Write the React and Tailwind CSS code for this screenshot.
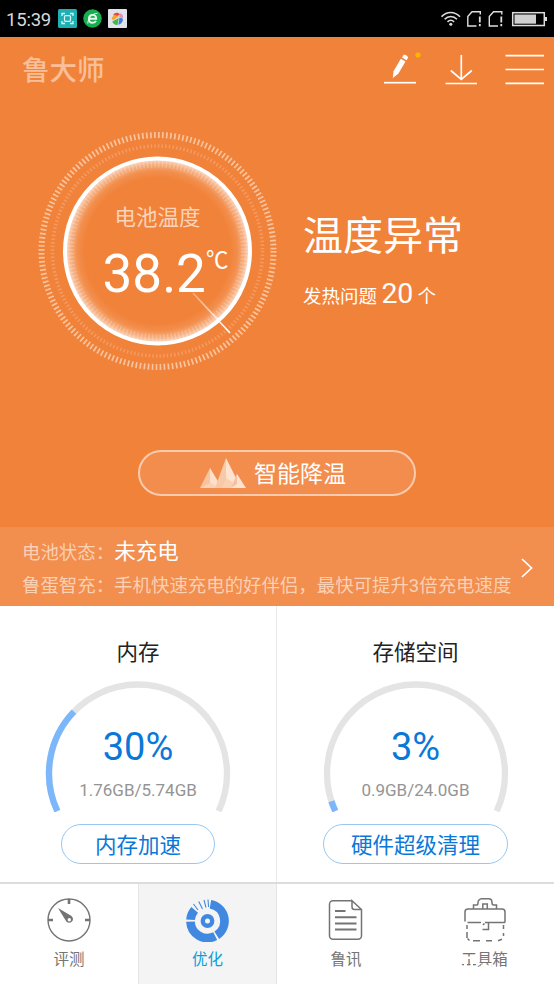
import React from "react";

const gauges = [
  { title: "内存", percent: 30, usage: "1.76GB/5.74GB", action: "内存加速", width: "w-[154px]" },
  { title: "存储空间", percent: 3, usage: "0.9GB/24.0GB", action: "硬件超级清理", width: "w-[185px]" },
];

const point = (cx, cy, r, deg) => {
  const a = (deg * Math.PI) / 180;
  return `${(cx + r * Math.cos(a)).toFixed(2)} ${(cy + r * Math.sin(a)).toFixed(2)}`;
};

// arc drawn clockwise, 0deg points to the right
const arc = (cx, cy, r, from, to) =>
  `M${point(cx, cy, r, from)}A${r} ${r} 0 ${to - from > 180 ? 1 : 0} 1 ${point(cx, cy, r, to)}`;

const StatusBar = () => (
  <div className="h-[37px] bg-black flex items-center justify-between px-[7px]">
    <div className="flex items-center gap-[6px]">
      <span className="w-[45px] text-[18.500px] leading-none tracking-[-0.200px] text-[#d8d8d8] whitespace-nowrap pt-[3px] -ml-px mr-px">15:39</span>
      <svg width="19" height="19" viewBox="0 0 19 19" fill="none">
        <rect width="19" height="19" rx="1.5" fill="#1fb0b3" />
        <path d="M4 7V4.5h3M12 4.5h3V7M15 12v2.500h-3M7 14.500H4V12" stroke="#d9f5f5" strokeWidth="1.300" />
        <rect x="6.500" y="6.700" width="6" height="5.600" rx="1" stroke="#d9f5f5" strokeWidth="1.200" />
      </svg>
      <svg width="19" height="19" viewBox="0 0 19 19" fill="none">
        <circle cx="9.500" cy="9.500" r="9.300" fill="#18ad50" />
        <path d="M6 9.700h7.200c0-2.400-1.300-3.800-3.500-3.800-2.300 0-3.800 1.700-3.800 4s1.500 3.800 3.800 3.800c1.500 0 2.700-.6 3.300-1.800" stroke="#e6f8ec" strokeWidth="1.900" />
        <path d="M4.800 14.500C5 9 9 4.500 14.500 4.300" stroke="#e6f8ec" strokeWidth="1" />
      </svg>
      <svg width="19" height="19" viewBox="0 0 19 19">
        <rect width="19" height="19" rx="1" fill="#e2e2ea" />
        <path d="M5 6.200C7 3.200 10 3.200 12 5.300L9.500 7z" fill="#e5483c" />
        <path d="M12.200 4.300c2.200 .8 3.200 2.500 2.900 4.700L11 7.500z" fill="#e78bb7" />
        <path d="M3.800 9.300c.5-3 3.900-3.500 6.900-1.800L5 11.500z" fill="#f4a62c" />
        <path d="M4.300 12.500 10.800 9l-1.300 7c-2.300.3-4.500-1-5.200-3.500z" fill="#45b649" />
        <path d="M11.500 8.500c2.800 0 4 1.500 3.200 3.600-.8 2-2.200 3.300-4.400 3.700z" fill="#3c7fe0" />
      </svg>
    </div>
    <svg width="106" height="19" viewBox="0 0 106 19" fill="none" stroke="#dedede" strokeWidth="1.400">
      <path d="M0.500 7.700C6 2 13.500 2 19 7.700M3.600 10.300c3.600-3.700 8.800-3.700 12.400 0M6.500 12.900c2-2 4.600-2 6.600 0" strokeWidth="1.600" />
      <circle cx="9.800" cy="15.300" r="1.500" fill="#dedede" stroke="none" />
      {[26, 47.5].map((x) => (
        <g key={x} transform={`translate(${x} 2)`}>
          <path d="M9.500 15H.8V5.500L5 .8h8.300v2.700" />
          <path d="M12.800 5.500v6M12.800 13v2.300" strokeWidth="1.800" />
        </g>
      ))}
      <rect x="71.700" y="3.700" width="31.600" height="12.800" strokeWidth="1.500" />
      <path d="M73.500 5.500h21.500v9.200H73.500z" fill="#d0d0d0" stroke="none" />
      <path d="M104 8h2v4h-2z" fill="#dedede" stroke="none" />
    </svg>
  </div>
);

const Header = () => (
  <div className="h-[63px] flex items-center justify-between pl-[22px] pr-[9px]">
    <h1 className="text-[27.500px] leading-none font-medium text-[#f9bf99] pt-[5px]">鲁大师</h1>
    <svg width="162" height="36" viewBox="0 0 162 36" fill="none" stroke="#fff" strokeWidth="1.700">
      {/* edit */}
      <path d="M1 31.700h32" />
      <path d="M9.800 27 10.500 20.200 17.800 7.800l4.700 2.700L15.300 22.700z" fill="#fff" stroke="none" />
      <path d="M19 6.600 20.300 4.300c1-1.500 5.500 1.100 4.600 2.800L23.600 9.300z" fill="#fff" stroke="none" />
      <circle cx="35" cy="4" r="2.600" fill="#ffb400" stroke="none" />
      {/* download */}
      <path d="M62.500 32.500H94M78.300 4v24M67.800 19.500l10.500 9 10.500-9" />
      {/* menu */}
      <path d="M122.500 4.700H161M122.500 18.500H161M122.500 32.300H161" />
    </svg>
  </div>
);

const Dial = () => (
  <div className="relative w-[240px] h-[240px] shrink-0">
    <svg width="240" height="240" viewBox="0 0 240 240" fill="none">
      <defs>
        <radialGradient id="glow">
          <stop offset="0.780" stopColor="#fff" stopOpacity="0" />
          <stop offset="0.860" stopColor="#fff" stopOpacity="0.100" />
          <stop offset="0.930" stopColor="#fff" stopOpacity="0.360" />
          <stop offset="1" stopColor="#fff" stopOpacity="0.800" />
        </radialGradient>
        <linearGradient id="hand" x1="156" y1="162" x2="193" y2="202" gradientUnits="userSpaceOnUse">
          <stop stopColor="#fff" stopOpacity="0.300" />
          <stop offset="1" stopColor="#fff" />
        </linearGradient>
      </defs>
      <circle cx="120.500" cy="120" r="116" stroke="#f9c4a0" strokeWidth="6" strokeDasharray="1.700 2.349" />
      <circle cx="120.500" cy="120" r="105" stroke="#f49c66" strokeWidth="3.600" strokeDasharray="1.400 2.265" />
      <circle cx="120.500" cy="120" r="93" fill="url(#glow)" />
      <circle cx="120.500" cy="120" r="87" stroke="#fff" strokeOpacity="0.200" strokeWidth="7" strokeDasharray="1.500 2.296" />
      <circle cx="120.500" cy="120" r="92.500" stroke="#fff" strokeWidth="4" />
      <path d="M156 162 193 202" stroke="url(#hand)" strokeWidth="1.700" />
    </svg>
    <div className="absolute inset-0 flex flex-col items-center pt-[74px]">
      <p className="text-[21.500px] leading-[26px] text-[#fbd3b9] pl-px">电池温度</p>
      <div className="flex items-start mt-[14px] ml-[17px] text-white">
        <span className="text-[53px] leading-[58px]">38.2</span>
        <span className="text-[22.500px] leading-[26px] mt-[2px]">℃</span>
      </div>
    </div>
  </div>
);

const CoolButton = () => (
  <button className="w-[278px] h-[46px] pr-[9px] rounded-full border-2 border-[#f9cbae] bg-[#f28d4d] flex items-center justify-center gap-[7px] text-white">
    <svg width="48" height="32" viewBox="0 0 48 32">
      <path d="M1 31 11 11l9 20z" fill="#f8c39d" />
      <path d="M11 11 20 26v5l-9-5z" fill="#fde0cb" />
      <path d="M1 31 11 26l9 5z" fill="#fbd2b5" />
      <path d="M16 31 27 1v30z" fill="#f9c8a5" />
      <path d="M27 1 42 31H27z" fill="#fde3d0" />
      <path d="M27 21l9 6-4 4h-9z" fill="#fad0b3" />
      <path d="M32 31 38 17l9 14z" fill="#fde3d0" />
      <path d="M32 31 38 17v10z" fill="#f8c09a" />
    </svg>
    <span className="text-[23px] leading-none pt-[2px]">智能降温</span>
  </button>
);

const BatteryStrip = () => (
  <div className="h-[79px] bg-[#f28e4e] flex items-center justify-between pl-[22px] pr-[21px]">
    <div className="text-[18.430px] text-[#fbd0b3] whitespace-nowrap pt-[5px]">
      <p className="h-[33px] flex items-center">
        电池状态：<span className="text-[21.500px] text-white">未充电</span>
      </p>
      <p className="h-[33px] flex items-center">鲁蛋智充：手机快速充电的好伴侣，最快可提升3倍充电速度</p>
    </div>
    <svg className="mt-[3px]" width="12" height="20" viewBox="0 0 12 20" fill="none" stroke="#fff" strokeWidth="1.700">
      <path d="M1 1l9.500 9L1 19" />
    </svg>
  </div>
);

const GaugeCard = ({ title, percent, usage, action, width }) => (
  <div className="flex flex-col items-center pt-[32px] first:border-r first:border-[#e9e9e9]">
    <h2 className="text-[21.500px] leading-[30px] text-[#222]">{title}</h2>
    <div className="relative w-[186px] h-[132px] mt-[12px]">
      <svg width="186" height="132" viewBox="0 0 186 132" fill="none" strokeWidth="6.300">
        <path d={arc(93, 93.5, 89, 155, 385)} stroke="#e4e4e4" />
        <path d={arc(93, 93.5, 89, 155, 155 + percent * 2.3)} stroke="#7db7fb" />
      </svg>
      <div className="absolute inset-0 flex flex-col items-center pt-[45px]">
        <span className="text-[38px] leading-[44px] text-[#0a78d8]">{percent}%</span>
        <span className="text-[17px] leading-[20px] mt-[11px] text-[#949494]">{usage}</span>
      </div>
    </div>
    <button
      className={`mt-[12px] h-[40px] pt-[3px] rounded-full border border-[#97c7f0] text-[21.500px] leading-none text-[#0a78d8] whitespace-nowrap ${width}`}
    >
      {action}
    </button>
  </div>
);

const MeterIcon = () => (
  <svg width="44" height="44" viewBox="0 0 44 44" fill="none" stroke="#747474">
    <circle cx="22" cy="22" r="21" strokeWidth="1.400" />
    <path d="M22 1v5M1 22h5M38 22h5" strokeWidth="2.600" />
    <path d="M11 10 24.500 18c4 4-1 9-5.200 5.500z" fill="#747474" stroke="none" />
    <circle cx="22.300" cy="21.700" r="1.700" fill="#fff" stroke="none" />
  </svg>
);

const OptimizeIcon = () => (
  <svg width="44" height="44" viewBox="0 0 44 44" fill="none" stroke="#4189e0">
    <path d={arc(21.5, 23, 17, 184, 221)} strokeWidth="8.700" />
    <path d={arc(21.5, 23, 17, 63, 178)} strokeWidth="8.700" />
    <path d={arc(21.5, 23, 17, -80, 57)} strokeWidth="8.700" />
    <path d="M7.500 6l4.500 6M12.800 3.500l3.700 7.500M18 2l2 7.500M22 1.500l.6 7.500" strokeWidth="1.100" />
    <circle cx="21.500" cy="23" r="4.700" strokeWidth="4.400" />
  </svg>
);

const NewsIcon = () => (
  <svg width="44" height="44" viewBox="0 0 44 44" fill="none" stroke="#747474" strokeWidth="1.500">
    <path d="M28 2.700H9a3.500 3.500 0 0 0-3.500 3.500v31.500A3.500 3.500 0 0 0 9 41.200h25a3.500 3.500 0 0 0 3.500-3.500V11.500L28 2.700V9a2.500 2.500 0 0 0 2.500 2.500h7" />
    <path d="M11 13h10.500M11 19.200h21.500M11 25.400h21.500M11 31.600h21.500" strokeWidth="2" />
  </svg>
);

const ToolboxIcon = () => (
  <svg width="44" height="44" viewBox="0 0 44 44" fill="none" stroke="#747474" strokeWidth="1.500">
    <path d="M2 23.500V14c0-2 1-3 3-3h34c2 0 3 1 3 3v10.500M4.500 24.500H18M22 24.500H42" />
    <path d="M10.500 11V7H14c1 0 1-1 1-2.500S16.500.8 18.500.8h7C28 .8 29 2 29 4.500 29 6 29.500 7 30.500 7h3v4M19.800 11V6h4.500v5" />
    <path d="M4 27v4M4 34v6M4.500 40.500l2 2M10 42.700h7M23 42.700h6M35 42.700l4-1.500M40.500 38v-3M40.500 31v-4M25.500 25v6.500h-6M21.500 25.500l-1.500 1.500" strokeWidth="1.500" />
  </svg>
);

const tabs = [
  { label: "评测", Icon: MeterIcon },
  { label: "优化", Icon: OptimizeIcon, active: true },
  { label: "鲁讯", Icon: NewsIcon },
  { label: "工具箱", Icon: ToolboxIcon, worn: true },
];

// small chips knocked out of the label
const Chips = () => (
  <svg className="absolute left-0 top-0" width="47" height="22" viewBox="0 0 47 22" fill="#fff">
    <path d="M4 7.500h7v2.500H4zM3 14h3v6H3zM9.500 14.500h2.500v6h-2.500zM15.500 11.500h3v5h-3zM20 15.500h5v2.500h-5zM27.500 14.500h3v5h-3zM32 16h2.500v4h-2.500z" />
  </svg>
);

const App = () => {
  return (
    <div className="w-[554px] h-[984px] flex flex-col overflow-hidden bg-white font-[Roboto,'Noto_Sans_CJK_SC',sans-serif]">
      <StatusBar />
      <section className="h-[490px] bg-[#f18239] flex flex-col">
        <Header />
        <div className="flex pl-[37px] pt-[31px]">
          <Dial />
          <div className="ml-[26px] pt-[78px] text-white whitespace-nowrap">
            <h2 className="text-[40px] leading-[56px]">温度异常</h2>
            <p className="mt-[11px] text-[18.500px] leading-[36px]">
              发热问题 <span className="text-[28.500px] tracking-[-0.400px]">20</span> 个
            </p>
          </div>
        </div>
        <div className="flex justify-center mt-[79px]">
          <CoolButton />
        </div>
      </section>
      <BatteryStrip />
      <section className="h-[276px] grid grid-cols-2">
        {gauges.map((g) => (
          <GaugeCard key={g.title} {...g} />
        ))}
      </section>
      <nav className="h-[102px] grid grid-cols-[138px_139px_138px_139px] border-t-2 border-[#dcdcdc]">
        {tabs.map(({ label, Icon, active, worn }) => (
          <div
            key={label}
            className={`flex flex-col items-center pt-[14px] ${active ? "bg-[#f4f4f4] border-x border-[#e4e4e4] text-[#0a9fdc]" : "text-[#747474]"}`}
          >
            <Icon />
            <span className="relative mt-[7px] text-[15.500px] leading-[22px]">
              {label}
              {worn && <Chips />}
            </span>
          </div>
        ))}
      </nav>
    </div>
  );
};

export default App;
